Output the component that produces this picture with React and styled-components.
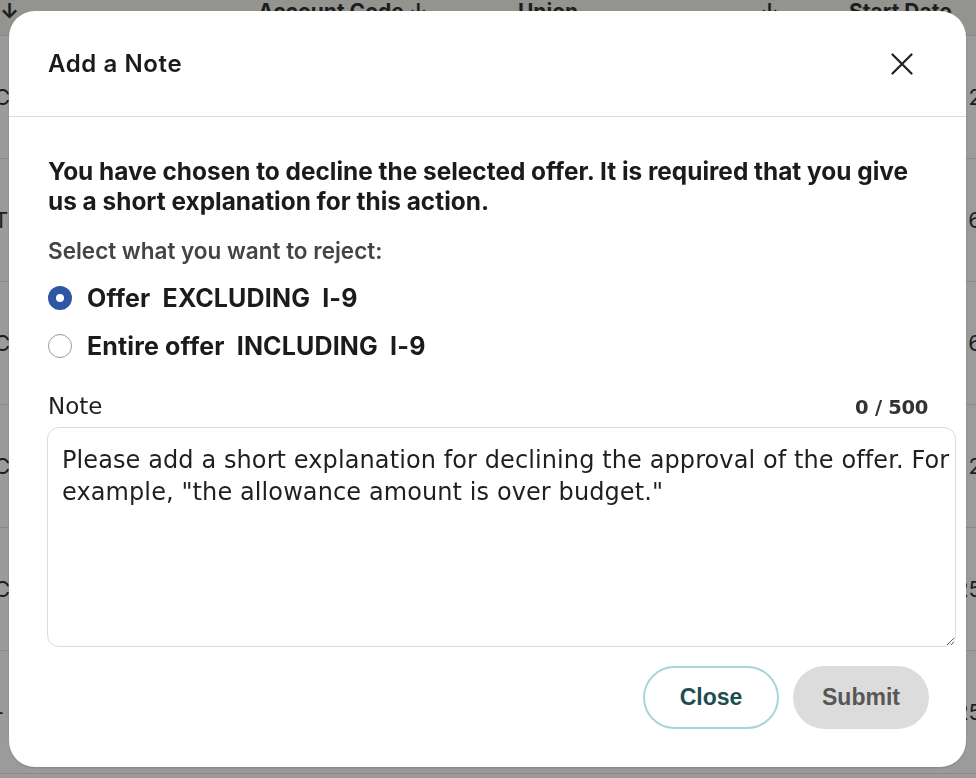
import { useState } from "react";
import styled, { createGlobalStyle } from "styled-components";

const GlobalStyle = createGlobalStyle`
  html, body {
    margin: 0;
    padding: 0;
    background: #9b9b9b;
    font-family: Inter, "Noto Sans", "Liberation Sans", sans-serif;
    overflow: hidden;
  }
  * {
    -webkit-font-smoothing: antialiased;
  }
`;

const Page = styled.div`
  width: 976px;
  height: 778px;
  overflow: hidden;
  background: #9b9b9b;
`;

const HeadRow = styled.div`
  display: grid;
  grid-template-columns: 166px 92px 260px 242px 89px 127px;
  height: 35px;
  background: #93938f;
  border-bottom: 1px solid #878785;
  font-weight: 700;
  font-size: 21px;
  line-height: 24px;
  color: #1d1d1d;
`;

const HeadCell = styled.div`
  white-space: nowrap;
`;

const Row = styled.div`
  display: flex;
  justify-content: space-between;
  align-items: center;
  height: 122px;
  border-bottom: 1px solid #888886;
  font-size: 22px;
  color: #1d1d1d;
  overflow: hidden;
`;

const Edge = styled.span`
  margin: ${(p) => (p.$right ? "0 -6px 0 0" : "0 0 0 -6px")};
`;

// ---- modal ----
const Backdrop = styled.div`
  position: fixed;
  inset: 0;
  display: flex;
  align-items: flex-start;
  justify-content: flex-start;
  padding: 11px 0 0 9px;
`;

const Dialog = styled.div`
  width: 957px;
  height: 756px;
  background: #fff;
  border-radius: 26px;
  box-shadow: 0 1px 2px rgba(0, 0, 0, 0.15);
  display: flex;
  flex-direction: column;
  overflow: hidden;
`;

const Header = styled.div`
  display: flex;
  align-items: center;
  justify-content: space-between;
  height: 105px;
  padding: 0 52px 0 39px;
  border-bottom: 1px solid #dcdcdc;
`;

const Title = styled.h2`
  margin: 0;
  font-size: 24px;
  font-weight: 600;
  color: #1b1b1b;
  letter-spacing: 0.6px;
`;

const IconButton = styled.button`
  border: none;
  background: none;
  padding: 0;
  width: 24px;
  height: 24px;
  display: flex;
  align-items: center;
  justify-content: center;
  cursor: pointer;
  color: #1f1f1f;
`;

const Body = styled.div`
  padding: 39px 37px 0 39px;
  display: flex;
  flex-direction: column;
`;

const Lead = styled.p`
  margin: 0;
  font-size: 24.4px;
  line-height: 30px;
  font-weight: 700;
  color: #1b1b1b;
`;

const SubLabel = styled.div`
  margin-top: 21px;
  font-size: 22.5px;
  line-height: 27px;
  font-weight: 600;
  color: #444;
`;

const RadioList = styled.div`
  display: flex;
  flex-direction: column;
  gap: 18px;
  margin-top: 19px;
`;

const RadioRow = styled.label`
  display: flex;
  align-items: center;
  gap: 15px;
  font-size: 25px;
  font-weight: 700;
  color: #1b1b1b;
  line-height: 30px;
  letter-spacing: 0.15px;
  cursor: pointer;
  white-space: pre;
`;

const RadioDot = styled.span`
  width: 24px;
  height: 24px;
  box-sizing: border-box;
  border-radius: 50%;
  border: ${(p) => (p.$checked ? "8px solid #2f56a3" : "1px solid #9c9c9c")};
  background: #fff;
  flex-shrink: 0;
`;

const NoteHead = styled.div`
  display: flex;
  justify-content: space-between;
  align-items: baseline;
  margin-top: 31px;
  margin-right: 1px;
  line-height: 28px;
`;

const NoteLabel = styled.span`
  font-family: "DejaVu Sans", sans-serif;
  font-size: 23px;
  font-weight: 400;
  color: #1f1f1f;
`;

const Counter = styled.span`
  font-family: "DejaVu Sans", sans-serif;
  font-size: 19.5px;
  font-weight: 700;
  color: #333;
  letter-spacing: -0.3px;
`;

const TextArea = styled.textarea`
  box-sizing: content-box;
  width: calc(100% + 12px);
  height: 188px;
  margin: 5px 0 0 -1px;
  padding: 16px 0 14px 14px;
  border: 1px solid #dcdcdc;
  border-radius: 12px;
  font-family: "DejaVu Sans", sans-serif;
  font-size: 24px;
  line-height: 32px;
  letter-spacing: 0.1px;
  color: #1f1f1f;
  resize: vertical;
  outline: none;

  &::placeholder {
    color: #1f1f1f;
    opacity: 1;
  }
`;

const Footer = styled.div`
  display: flex;
  justify-content: flex-end;
  gap: 14px;
  margin-top: 19px;
`;

const Button = styled.button`
  box-sizing: border-box;
  width: 136px;
  height: 63px;
  border-radius: 32px;
  font-family: "Liberation Sans", Arial, sans-serif;
  font-size: 23px;
  font-weight: 700;
  cursor: pointer;
  border: ${(p) => (p.$primary ? "none" : "2.5px solid #a9d5d9")};
  background: ${(p) => (p.$primary ? "#dcdcdc" : "#fff")};
  color: ${(p) => (p.$primary ? "#575757" : "#1d4e4f")};
`;

const headers = ["↓", "", "Account Code ↓", "Union", "↓", "Start Date"];
const rows = [
  ["C", "2"],
  ["T", "6"],
  ["C", "6"],
  ["C", "2"],
  ["C", "25"],
  ["-", "25"],
];

const CloseIcon = () => (
  <svg width="22" height="22" viewBox="0 0 22 22" fill="none">
    <path
      d="M1.5 1.5 L20.5 20.5 M20.5 1.5 L1.5 20.5"
      stroke="currentColor"
      strokeWidth="2.2"
      strokeLinecap="round"
    />
  </svg>
);

export default function App() {
  const [choice, setChoice] = useState("excluding");
  const [note, setNote] = useState("");

  return (
    <>
      <GlobalStyle />
      <Page>
        <HeadRow>
          {headers.map((h, i) => (
            <HeadCell key={i}>{h}</HeadCell>
          ))}
        </HeadRow>
        {rows.map(([l, r], i) => (
          <Row key={i}>
            <Edge>{l}</Edge>
            <Edge $right>{r}</Edge>
          </Row>
        ))}
      </Page>

      <Backdrop>
        <Dialog role="dialog" aria-labelledby="note-title">
          <Header>
            <Title id="note-title">Add a Note</Title>
            <IconButton aria-label="Close">
              <CloseIcon />
            </IconButton>
          </Header>
          <Body>
            <Lead>
              You have chosen to decline the selected offer. It is required that
              you give us a short explanation for this action.
            </Lead>
            <SubLabel>Select what you want to reject:</SubLabel>
            <RadioList>
              <RadioRow onClick={() => setChoice("excluding")}>
                <RadioDot $checked={choice === "excluding"} />
                {"Offer  EXCLUDING  I-9"}
              </RadioRow>
              <RadioRow onClick={() => setChoice("including")}>
                <RadioDot $checked={choice === "including"} />
                {"Entire offer  INCLUDING  I-9"}
              </RadioRow>
            </RadioList>
            <NoteHead>
              <NoteLabel>Note</NoteLabel>
              <Counter>{note.length} / 500</Counter>
            </NoteHead>
            <TextArea
              value={note}
              maxLength={500}
              onChange={(e) => setNote(e.target.value)}
              placeholder={
                'Please add a short explanation for declining the approval of the offer. For example, "the allowance amount is over budget."'
              }
            />
            <Footer>
              <Button>Close</Button>
              <Button $primary disabled>
                Submit
              </Button>
            </Footer>
          </Body>
        </Dialog>
      </Backdrop>
    </>
  );
}
